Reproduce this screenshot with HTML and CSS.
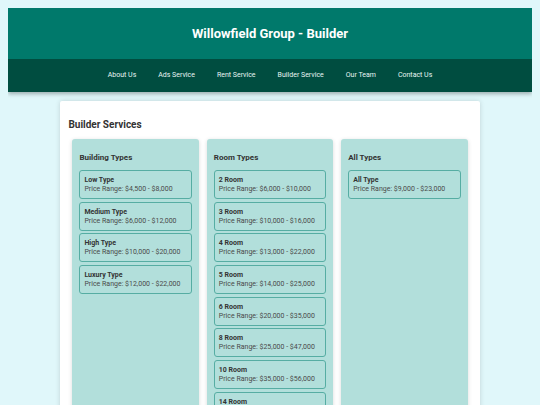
FILE: index.html
```html
<!DOCTYPE html>
<html lang="en">
<head>
<meta charset="utf-8">
<title>Willowfield Group - Builder</title>
<link rel="stylesheet" href="styles.css">
</head>
<body>
<header class="site-header">
  <div class="header-top">
    <h1 class="site-title">Willowfield Group - Builder</h1>
  </div>
  <nav class="site-nav">
    <a href="#">About Us</a>
    <a href="#">Ads Service</a>
    <a href="#">Rent Service</a>
    <a href="#">Builder Service</a>
    <a href="#">Our Team</a>
    <a href="#">Contact Us</a>
  </nav>
</header>
<main class="card">
  <h2 class="card-title">Builder Services</h2>
  <div class="columns">
    <section class="column">
      <h3 class="column-title">Building Types</h3>
      <div class="item"><div class="item-name">Low Type</div><div class="item-price">Price Range: $4,500 - $8,000</div></div>
      <div class="item"><div class="item-name">Medium Type</div><div class="item-price">Price Range: $6,000 - $12,000</div></div>
      <div class="item"><div class="item-name">High Type</div><div class="item-price">Price Range: $10,000 - $20,000</div></div>
      <div class="item"><div class="item-name">Luxury Type</div><div class="item-price">Price Range: $12,000 - $22,000</div></div>
    </section>
    <section class="column">
      <h3 class="column-title">Room Types</h3>
      <div class="item"><div class="item-name">2 Room</div><div class="item-price">Price Range: $6,000 - $10,000</div></div>
      <div class="item"><div class="item-name">3 Room</div><div class="item-price">Price Range: $10,000 - $16,000</div></div>
      <div class="item"><div class="item-name">4 Room</div><div class="item-price">Price Range: $13,000 - $22,000</div></div>
      <div class="item"><div class="item-name">5 Room</div><div class="item-price">Price Range: $14,000 - $25,000</div></div>
      <div class="item"><div class="item-name">6 Room</div><div class="item-price">Price Range: $20,000 - $35,000</div></div>
      <div class="item"><div class="item-name">8 Room</div><div class="item-price">Price Range: $25,000 - $47,000</div></div>
      <div class="item"><div class="item-name">10 Room</div><div class="item-price">Price Range: $35,000 - $56,000</div></div>
      <div class="item"><div class="item-name">14 Room</div><div class="item-price">Price Range: $45,000 - $70,000</div></div>
    </section>
    <section class="column">
      <h3 class="column-title">All Types</h3>
      <div class="item"><div class="item-name">All Type</div><div class="item-price">Price Range: $9,000 - $23,000</div></div>
    </section>
  </div>
</main>
</body>
</html>
```

FILE: styles.css
```css
html, body {
  margin: 0;
  padding: 0;
}
body {
  margin: 8px;
  background: #e0f7fa;
  font-family: Roboto, "Liberation Sans", Arial, sans-serif;
  color: #333333;
}
.site-header {
  box-shadow: 0 2px 4px rgba(0, 0, 0, 0.3);
}
.header-top {
  background: #00796b;
  height: 51px;
  display: flex;
  align-items: center;
  justify-content: center;
}
.site-title {
  margin: 0;
  color: #ffffff;
  font-size: 13px;
  font-weight: 700;
  line-height: 15px;
}
.site-nav {
  background: #004d40;
  height: 33px;
  display: flex;
  align-items: center;
  justify-content: center;
  gap: 22px;
}
.site-nav a {
  color: #e8f5f3;
  text-decoration: none;
  font-size: 7px;
  line-height: 9px;
}
.card {
  display: block;
  width: 80%;
  margin: 9px auto 0;
  background: #ffffff;
  padding: 8px;
  box-sizing: border-box;
  box-shadow: 0 0 5px rgba(0, 0, 0, 0.15);
  border-radius: 2px;
}
.card-title {
  margin: 10px 0 8px;
  font-size: 10px;
  line-height: 12px;
  font-weight: 700;
  color: #333333;
}
.columns {
  display: flex;
  align-items: stretch;
}
.column {
  flex: 1;
  margin: 0 4px;
  background: #b2dfdb;
  border-radius: 3px;
  padding: 7px 7px 80px;
  box-shadow: 0 1px 4px rgba(0, 0, 0, 0.15);
}
.column-title {
  margin: 7px 0 7px;
  font-size: 8px;
  line-height: 10px;
  font-weight: 700;
  color: #333333;
}
.item {
  border: 1px solid #56ada3;
  border-radius: 3px;
  padding: 4px 4px;
  margin-bottom: 2.7px;
}
.item-name {
  font-size: 7px;
  line-height: 10px;
  font-weight: 700;
  color: #333333;
}
.item-price {
  font-size: 7px;
  line-height: 9px;
  color: #4a4a4a;
}
```
